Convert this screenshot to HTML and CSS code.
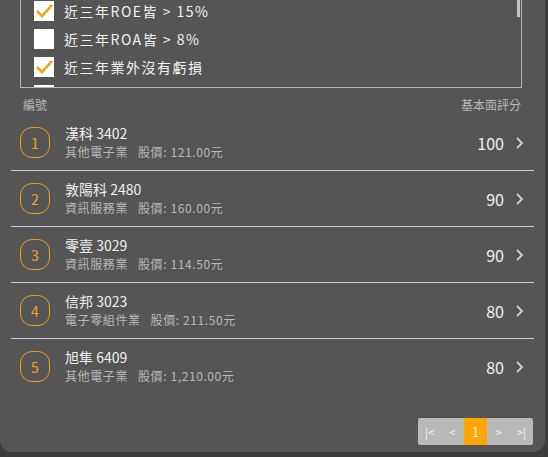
FILE: index.html
```
<!DOCTYPE html>
<html lang="zh-Hant">
<head>
    <meta charset="UTF-8">
    <title>選股結果</title>
    <link rel="stylesheet" href="styles.css">
</head>
<body>
    <div class="panel">
        <div class="filter-box">
            <div class="filter-list">
                <label class="filter-item"><span class="check on"><svg viewBox="0 0 20 20"><polyline points="3,10 8,15 18,4"/></svg></span>近三年ROE皆 &gt; 15%</label>
                <label class="filter-item"><span class="check"></span>近三年ROA皆 &gt; 8%</label>
                <label class="filter-item"><span class="check on"><svg viewBox="0 0 20 20"><polyline points="3,10 8,15 18,4"/></svg></span>近三年業外沒有虧損</label>
                <label class="filter-item"><span class="check"></span></label>
            </div>
            <div class="scroll-thumb"></div>
        </div>

        <div class="list-head">
            <span>編號</span>
            <span>基本面評分</span>
        </div>

        <div class="stock-list">
            <div class="stock-row">
                <div class="rank">1</div>
                <div class="stock-info">
                    <div class="stock-name">漢科 3402</div>
                    <div class="stock-sub">其他電子業<span class="price">股價: 121.00元</span></div>
                </div>
                <div class="score">100</div>
                <svg class="chevron" viewBox="0 0 10 14"><polyline points="2,2 7,7 2,12"/></svg>
            </div>
            <div class="stock-row">
                <div class="rank">2</div>
                <div class="stock-info">
                    <div class="stock-name">敦陽科 2480</div>
                    <div class="stock-sub">資訊服務業<span class="price">股價: 160.00元</span></div>
                </div>
                <div class="score">90</div>
                <svg class="chevron" viewBox="0 0 10 14"><polyline points="2,2 7,7 2,12"/></svg>
            </div>
            <div class="stock-row">
                <div class="rank">3</div>
                <div class="stock-info">
                    <div class="stock-name">零壹 3029</div>
                    <div class="stock-sub">資訊服務業<span class="price">股價: 114.50元</span></div>
                </div>
                <div class="score">90</div>
                <svg class="chevron" viewBox="0 0 10 14"><polyline points="2,2 7,7 2,12"/></svg>
            </div>
            <div class="stock-row">
                <div class="rank">4</div>
                <div class="stock-info">
                    <div class="stock-name">信邦 3023</div>
                    <div class="stock-sub">電子零組件業<span class="price">股價: 211.50元</span></div>
                </div>
                <div class="score">80</div>
                <svg class="chevron" viewBox="0 0 10 14"><polyline points="2,2 7,7 2,12"/></svg>
            </div>
            <div class="stock-row last">
                <div class="rank">5</div>
                <div class="stock-info">
                    <div class="stock-name">旭隼 6409</div>
                    <div class="stock-sub">其他電子業<span class="price">股價: 1,210.00元</span></div>
                </div>
                <div class="score">80</div>
                <svg class="chevron" viewBox="0 0 10 14"><polyline points="2,2 7,7 2,12"/></svg>
            </div>
        </div>

        <div class="pager">
            <span>|&lt;</span>
            <span>&lt;</span>
            <span class="current">1</span>
            <span>&gt;</span>
            <span>&gt;|</span>
        </div>
    </div>
</body>
</html>
```

FILE: styles.css
```
body {
    margin: 0;
    background-color: #3d3d3d;
    font-family: "Noto Sans CJK TC", "Noto Sans", sans-serif;
    color: #eeeeee;
}
.panel {
    width: 545px;
    height: 452px;
    background-color: #555555;
    border-radius: 0 0 12px 12px;
    position: relative;
    overflow: hidden;
}
.filter-box {
    position: relative;
    margin: 0 23px 0 20px;
    height: 87px;
    border: 1px solid #b4b4b4;
    border-top: none;
    overflow: hidden;
}
.filter-list {
    margin-top: -3px;
}
.filter-item {
    display: flex;
    align-items: center;
    height: 28px;
    padding-left: 13px;
    font-size: 14px;
    letter-spacing: 1.5px;
    color: #f2f2f2;
}
.check {
    width: 20px;
    height: 20px;
    background-color: #ffffff;
    margin-right: 10px;
    display: flex;
}
.check svg {
    width: 20px;
    height: 20px;
    fill: none;
    stroke: #f3a21c;
    stroke-width: 2.6;
}
.scroll-thumb {
    position: absolute;
    top: 0;
    right: 1px;
    width: 3px;
    height: 17px;
    background-color: #c4c4c4;
}
.list-head {
    display: flex;
    justify-content: space-between;
    margin: 8px 24px 0 23px;
    font-size: 12px;
    color: #b8b8b8;
    height: 19px;
}
.stock-list {
    margin: 0 11px;
}
.stock-row {
    display: flex;
    align-items: center;
    height: 55px;
    border-bottom: 1px solid #c8c8c8;
}
.stock-row.last {
    border-bottom: none;
}
.rank {
    width: 28px;
    height: 29px;
    margin-left: 9px;
    border: 1.5px solid #e8a317;
    border-radius: 12px;
    color: #f2a51d;
    font-size: 14px;
    display: flex;
    align-items: center;
    justify-content: center;
}
.stock-info {
    flex: 1;
    margin-left: 15px;
}
.stock-name {
    font-size: 14px;
    line-height: 19px;
    color: #f0f0f0;
}
.stock-sub {
    font-size: 12px;
    line-height: 18px;
    color: #b8b8b8;
    letter-spacing: 0.6px;
}
.stock-sub .price {
    margin-left: 10px;
}
.score {
    font-size: 16px;
    color: #f0f0f0;
    margin-right: 11px;
}
.chevron {
    width: 10px;
    height: 14px;
    margin-right: 9px;
    fill: none;
    stroke: #d0d0d0;
    stroke-width: 1.8;
}
.pager {
    position: absolute;
    right: 12px;
    top: 418px;
    display: flex;
    height: 27px;
    background-color: #b9b9b9;
    border-radius: 2px;
}
.pager span {
    width: 23px;
    display: flex;
    align-items: center;
    justify-content: center;
    font-size: 11px;
    color: #f4f4f4;
}
.pager .current {
    background-color: #ffa500;
    font-size: 13px;
}
```
